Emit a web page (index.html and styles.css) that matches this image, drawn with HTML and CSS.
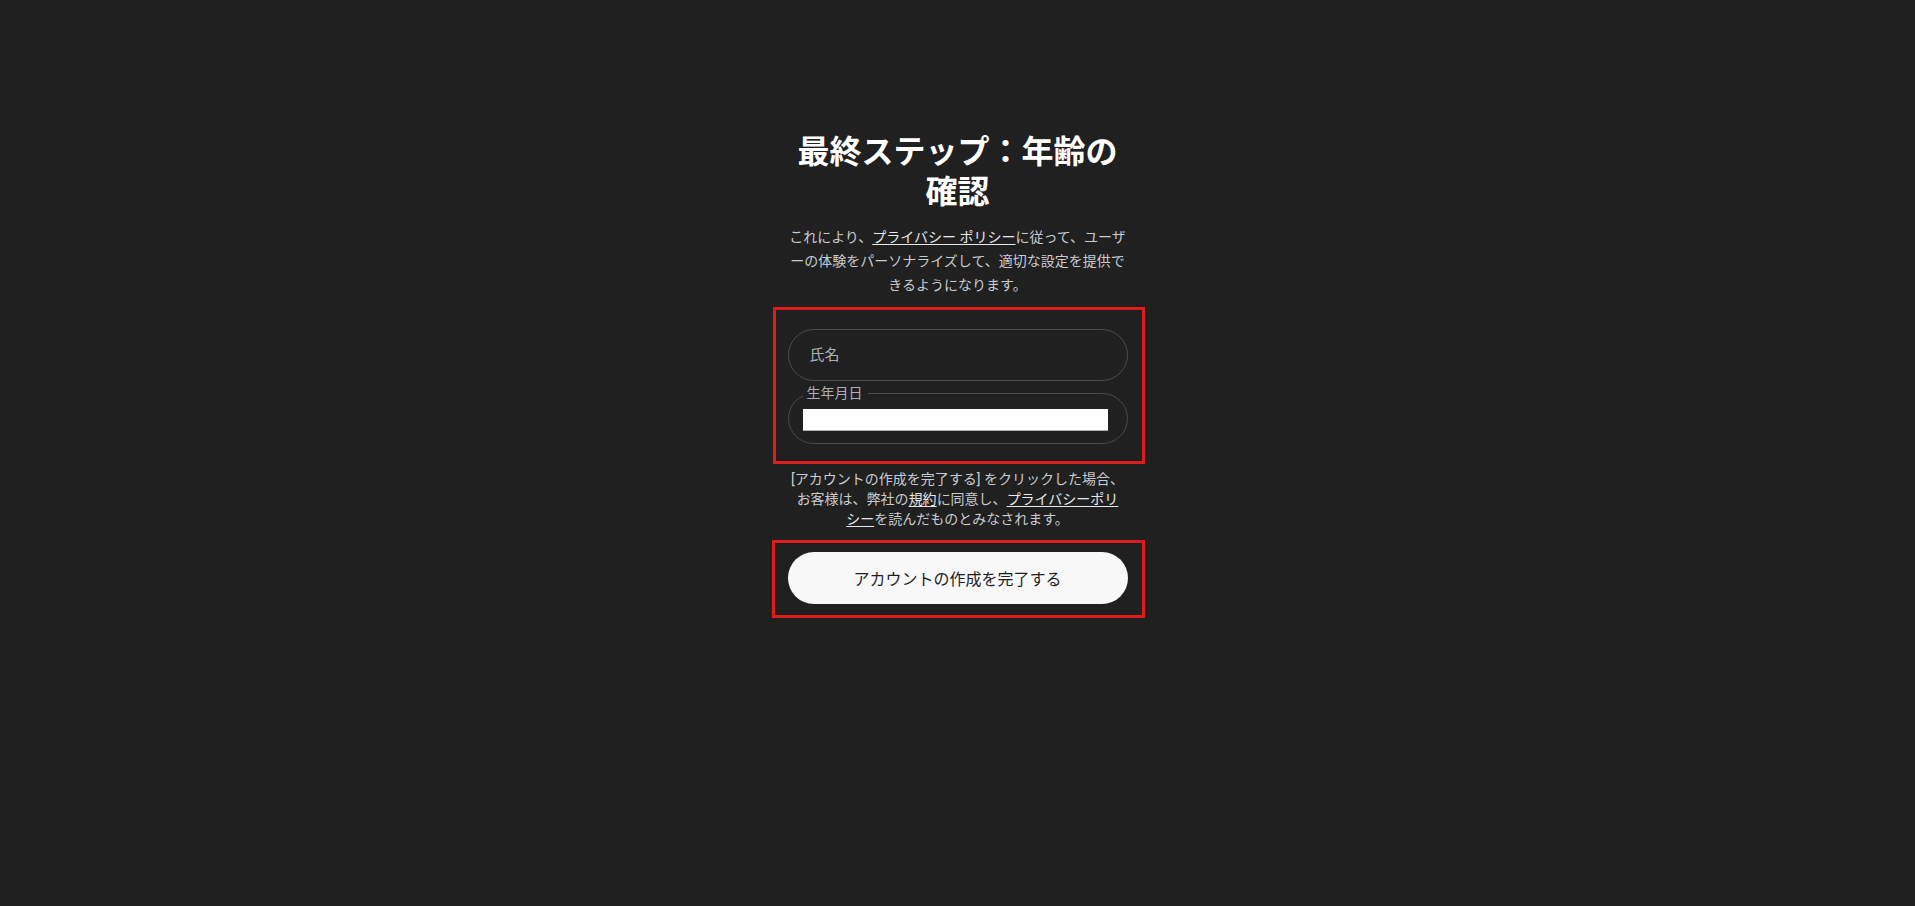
FILE: index.html
```html
<!DOCTYPE html>
<html lang="ja">
<head>
<meta charset="utf-8">
<title>最終ステップ：年齢の確認</title>
<link rel="stylesheet" href="styles.css">
</head>
<body>
<main class="page">
  <section class="column">
    <h1 class="title">最終ステップ：年齢の確認</h1>
    <p class="desc">これにより、<a class="link" href="#">プライバシー ポリシー</a>に従って、ユーザーの体験をパーソナライズして、適切な設定を提供できるようになります。</p>
    <div class="mark mark-fields">
      <div class="field">
        <span class="placeholder">氏名</span>
      </div>
      <fieldset class="field-date">
        <legend class="legend">生年月日</legend>
        <div class="date-input"></div>
      </fieldset>
    </div>
    <p class="terms">[アカウントの作成を完了する] をクリックした場合、お客様は、弊社の<a class="link" href="#">規約</a>に同意し、<a class="link" href="#">プライバシーポリシー</a>を読んだものとみなされます。</p>
    <div class="mark mark-button">
      <button class="btn" type="button">アカウントの作成を完了する</button>
    </div>
  </section>
</main>
</body>
</html>
```

FILE: styles.css
```css
html, body {
  margin: 0;
  padding: 0;
  background: #202020;
  height: 100%;
}
body {
  font-family: Roboto, "Noto Sans CJK JP", sans-serif;
  color: #c8cbd0;
}
.page {
  display: flex;
  justify-content: center;
  padding-top: 132px;
}
.column {
  width: 340px;
  display: flex;
  flex-direction: column;
  align-items: center;
}
.title {
  margin: 0;
  width: 340px;
  font-size: 32px;
  line-height: 40px;
  font-weight: 700;
  color: #ffffff;
  text-align: center;
}
.desc {
  margin: 13px 0 0;
  width: 338px;
  font-size: 14px;
  line-height: 24px;
  text-align: center;
  color: #c8cbd0;
}
.link {
  color: #e6e8ec;
  text-decoration: underline;
  text-underline-offset: 2px;
}
.mark {
  border: 3px solid #dd1c1c;
  box-sizing: border-box;
  align-self: stretch;
}
.mark-fields {
  margin: 10px -17px 0 -15px;
  padding: 19px 14px 17px 12px;
}
.field {
  height: 52px;
  box-sizing: border-box;
  border: 1px solid #4a4a4a;
  border-radius: 26px;
  display: flex;
  align-items: center;
  padding: 0 0 3px 21px;
}
.placeholder {
  font-size: 15px;
  color: #a9b0bb;
}
.field-date {
  margin: 4px 0 0;
  border: 1px solid #4a4a4a;
  border-radius: 26px;
  padding: 0 19px 12px 14px;
  min-width: 0;
}
.legend {
  padding: 0 5px 0 4px;
  font-size: 14px;
  line-height: 16px;
  color: #a9b0bb;
}
.date-input {
  margin-top: 8px;
  height: 22px;
  background: #ffffff;
  border-bottom: 1px solid #b0b0b0;
  box-sizing: border-box;
}
.terms {
  margin: 5px 0 0;
  width: 333px;
  font-size: 14px;
  line-height: 20px;
  text-align: center;
  color: #c8cbd0;
}
.mark-button {
  margin: 11px -17px 0 -16px;
  padding: 9px 14px 11px 13px;
}
.btn {
  display: block;
  width: 100%;
  height: 52px;
  border: none;
  border-radius: 26px;
  background: #f8f8f8;
  color: #1f1f1f;
  font-family: Roboto, "Noto Sans CJK JP", sans-serif;
  font-size: 16px;
  cursor: pointer;
}
```
